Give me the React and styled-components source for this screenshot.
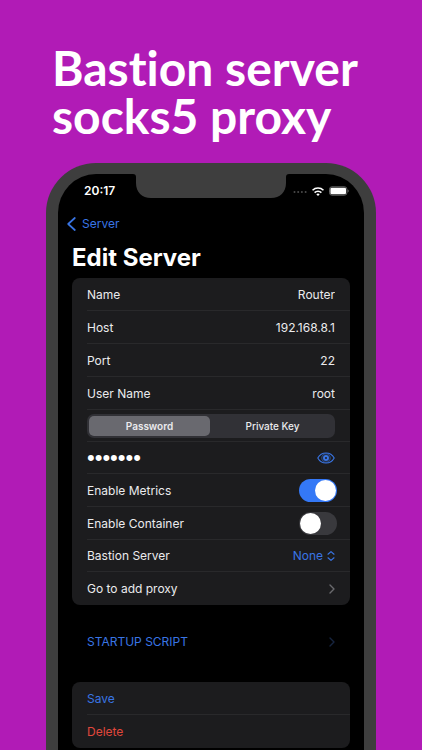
import React, { useState } from "react";
import styled, { createGlobalStyle } from "styled-components";


function App() {

  const [server, setServer] = useState({
    name: "Router",
    host: "192.168.8.1",
    port: "22",
    user: "root",
    password: "9182736",
  });
  const [auth, setAuth] = useState("password");
  const [showPassword, setShowPassword] = useState(false);
  const [metrics, setMetrics] = useState(true);
  const [container, setContainer] = useState(false);

  const update = (e) => {
    setServer({ ...server, [e.target.name]: e.target.value });
  }

  return (
    <Page>
      <GlobalStyle />
      <Headline>Bastion server<br />socks5 proxy</Headline>
      <Phone>
        <Notch viewBox="0 0 156 24" aria-hidden="true">
          <path d="M0 0C2 0 3 1 3 3v6c0 9 6 15 15 15h120c9 0 15-6 15-15V3c0-2 1-3 3-3z" fill="#3e3e3e" />
        </Notch>
        <StatusBar>
          <Time>20:17</Time>
          <StatusIcons>
            <Signal />
            <Wifi />
            <Battery />
          </StatusIcons>
        </StatusBar>
        <BackLink href="#server">
          <svg width="9" height="14" viewBox="0 0 9 14" fill="none" stroke="currentColor" strokeWidth="1.7" strokeLinecap="round" strokeLinejoin="round" aria-hidden="true">
            <path d="M7.8 1L1.2 7l6.6 6" />
          </svg>
          Server
        </BackLink>
        <Title>Edit Server</Title>

        <Form onSubmit={(e) => e.preventDefault()}>
          <Card>
            {fields.map((field) => (
              <Row key={field.name}>
                <label htmlFor={field.name}>{field.label}</label>
                <Input id={field.name} name={field.name} value={server[field.name]} onChange={update} />
              </Row>
            ))}
            <Row $compact>
              <Segments role="radiogroup" aria-label="Authentication">
                <Segment>
                  <input type="radio" name="auth" checked={auth === "password"} onChange={() => setAuth("password")} />
                  <span>Password</span>
                </Segment>
                <Segment>
                  <input type="radio" name="auth" checked={auth === "key"} onChange={() => setAuth("key")} />
                  <span>Private Key</span>
                </Segment>
              </Segments>
            </Row>
            <Row $compact>
              <PasswordInput
                type={showPassword ? "text" : "password"}
                name="password"
                aria-label="Password"
                value={server.password}
                onChange={update}
              />
              <IconButton type="button" aria-label="Show password" onClick={() => setShowPassword(!showPassword)}>
                <Eye />
              </IconButton>
            </Row>
            <Row $wide>
              <label htmlFor="metrics">Enable Metrics</label>
              <Switch id="metrics" type="checkbox" role="switch" checked={metrics} onChange={() => setMetrics(!metrics)} />
            </Row>
            <Row $wide>
              <label htmlFor="container">Enable Container</label>
              <Switch id="container" type="checkbox" role="switch" checked={container} onChange={() => setContainer(!container)} />
            </Row>
            <Row $compact>
              <label htmlFor="bastion">Bastion Server</label>
              <Picker>
                <Select id="bastion" defaultValue="None">
                  <option>None</option>
                </Select>
                <svg width="8" height="12" viewBox="0 0 8 12" fill="none" stroke="currentColor" strokeWidth="1.2" strokeLinecap="round" strokeLinejoin="round" aria-hidden="true">
                  <path d="M1 4.2l3-2.6 3 2.6M1 7.8l3 2.6 3-2.6" />
                </svg>
              </Picker>
            </Row>
            <RowLink href="#proxy">
              Go to add proxy
              <Chevron color="#6a6a6e" />
            </RowLink>
          </Card>

          <Card $plain>
            <RowLink href="#script" $color="#3975e4">
              STARTUP SCRIPT
              <Chevron color="#16243f" />
            </RowLink>
          </Card>

          <Card>
            <RowButton type="submit" $color="#3975e4">Save</RowButton>
            <RowButton type="button" $color="#e1473c">Delete</RowButton>
          </Card>
        </Form>
      </Phone>
    </Page>
  )
}


const fields = [
  { name: "name", label: "Name" },
  { name: "host", label: "Host" },
  { name: "port", label: "Port" },
  { name: "user", label: "User Name" },
];

function Signal() {
  return (
    <svg width="14" height="4" viewBox="0 0 14 4" fill="#4a4a4a" aria-hidden="true">
      <circle cx="1.5" cy="3" r="1" />
      <circle cx="5.2" cy="3" r="1" />
      <circle cx="8.9" cy="3" r="1" />
      <circle cx="12.6" cy="3" r="1" />
    </svg>
  )
}

function Wifi() {
  return (
    <svg width="12" height="9" viewBox="0 0 12 9" fill="none" stroke="#fff" strokeWidth="1.6" aria-hidden="true">
      <path d="M.5 3.3a7.8 7.8 0 0 1 11 0" />
      <path d="M2.6 5.6a4.8 4.8 0 0 1 6.8 0" />
      <path d="M6 9L4.3 7.3a2.4 2.4 0 0 1 3.4 0z" fill="#fff" stroke="none" />
    </svg>
  )
}

function Battery() {
  return (
    <svg width="20" height="10" viewBox="0 0 20 10" aria-hidden="true">
      <rect x=".5" y=".8" width="17.4" height="8.4" rx="2.4" fill="none" stroke="#6f6f6f" strokeWidth=".9" />
      <rect x="1.4" y="1.7" width="15.6" height="6.6" rx="1.4" fill="#fff" />
      <path d="M18.7 3.6c.7.3.9.8.9 1.4s-.2 1.1-.9 1.4z" fill="#7d7d7d" />
    </svg>
  )
}

function Eye() {
  return (
    <svg width="18" height="12" viewBox="0 0 18 12" fill="none" stroke="currentColor" aria-hidden="true">
      <path d="M.8 6C2.4 3 5.4 1 9 1s6.6 2 8.2 5c-1.6 3-4.6 5-8.2 5S2.4 9 .8 6z" strokeWidth="1.1" />
      <circle cx="9" cy="6" r="2" strokeWidth="2" />
      <circle cx="9" cy="6" r="4.2" strokeWidth=".6" />
    </svg>
  )
}

function Chevron({ color }) {
  return (
    <svg width="6" height="10" viewBox="0 0 6 10" fill="none" stroke={color} strokeWidth="1.4" strokeLinecap="round" strokeLinejoin="round" aria-hidden="true">
      <path d="M1 1l4 4-4 4" />
    </svg>
  )
}


const GlobalStyle = createGlobalStyle`
  * {
    box-sizing: border-box;
  }

  body {
    margin: 0;
    background: #b11bb6;
    font-family: Inter, "Liberation Sans", sans-serif;
  }

  input, select, button {
    font: inherit;
    color: inherit;
    margin: 0;
    padding: 0;
    border: 0;
    background: none;
  }

  svg {
    display: block;
    flex: none;
  }
`;

const Page = styled.main`
  display: flex;
  flex-direction: column;
  min-height: 100vh;
  padding: 44px 46px 0;
`;

const Headline = styled.h1`
  margin: 0 0 23px;
  padding-left: 6px;
  color: white;
  font-family: Lato, sans-serif;
  font-size: 48px;
  font-variant-ligatures: none;
  font-weight: 700;
  line-height: 48px;
  white-space: nowrap;
`;

const Phone = styled.section`
  position: relative;
  flex: 1;
  padding-bottom: 2px;
  border: solid #3e3e3e;
  border-width: 11px 12px 0;
  border-radius: 50px 50px 0 0;
  background: black;
  color: #ebebed;
  font-size: 12px;
  line-height: 16px;
`;

const Notch = styled.svg`
  position: absolute;
  top: 0;
  left: 50%;
  width: 156px;
  height: 24px;
  transform: translateX(-50%);
`;

const StatusBar = styled.div`
  display: flex;
  align-items: center;
  justify-content: space-between;
  height: 34px;
  padding: 0 15px 0 26px;
`;

const Time = styled.span`
  color: white;
  font-weight: 600;
`;

const StatusIcons = styled.div`
  display: flex;
  align-items: center;
  gap: 5px;
`;

const BackLink = styled.a`
  display: flex;
  align-items: center;
  gap: 6px;
  width: fit-content;
  margin: 8px 0 0 9px;
  color: #3975e4;
  text-decoration: none;
`;

const Title = styled.h2`
  margin: 10px 14px 4px;
  color: white;
  font-size: 24px;
  font-weight: 700;
  line-height: 32px;
`;

const Form = styled.form`
  display: flex;
  flex-direction: column;
  gap: 20px;
  padding: 0 14px;
`;

const Card = styled.div`
  padding-bottom: ${(props) => (props.$plain ? "4px" : "0")};
  border-radius: 8px;
  background: ${(props) => (props.$plain ? "none" : "#1c1c1e")};
`;

const Row = styled.div`
  display: flex;
  align-items: center;
  justify-content: space-between;
  width: 100%;
  height: ${(props) => (props.$compact ? "32px" : "33px")};
  padding: 0 ${(props) => (props.$wide ? "13px" : "15px")} 0 15px;
  color: ${(props) => props.$color || "inherit"};
  text-align: left;
  text-decoration: none;

  &:not(:last-child) {
    background: linear-gradient(#29292b, #29292b) 15px 100% / 100% 1px no-repeat;
  }
`;

const RowLink = styled(Row).attrs({ as: "a" })``;

const RowButton = styled(Row).attrs({ as: "button" })``;

const Input = styled.input`
  flex: 1;
  min-width: 0;
  text-align: right;
  outline: none;
`;

const PasswordInput = styled(Input)`
  height: 24px;
  color: white;
  font-family: "Liberation Sans", sans-serif;
  font-size: ${(props) => (props.type === "password" ? "22px" : "12px")};
  text-align: left;
`;

const Segments = styled.div`
  display: flex;
  flex: 1;
  gap: 2px;
  padding: 2px;
  border-radius: 7px;
  background: #313136;
`;

const Segment = styled.label`
  flex: 1;
  color: #ebebed;
  font-size: 10px;
  font-weight: 500;
  line-height: 20px;
  text-align: center;

  input {
    position: absolute;
    opacity: 0;
  }

  span {
    display: block;
    border-radius: 5px;
  }

  input:checked + span {
    background: #69696f;
    font-weight: 600;
  }
`;

const IconButton = styled.button`
  color: #3975e4;
`;

const Switch = styled.input`
  display: flex;
  appearance: none;
  width: 38px;
  height: 23px;
  padding: 1px;
  border-radius: 12px;
  background: #39393d;

  &::before {
    content: "";
    width: 21px;
    height: 21px;
    border-radius: 50%;
    background: white;
  }

  &:checked {
    justify-content: flex-end;
    background: #3478f6;
  }
`;

const Picker = styled.div`
  display: flex;
  align-items: center;
  gap: 4px;
  color: #3975e4;
`;

const Select = styled.select`
  appearance: none;
  field-sizing: content;
  outline: none;
`;


export default App
